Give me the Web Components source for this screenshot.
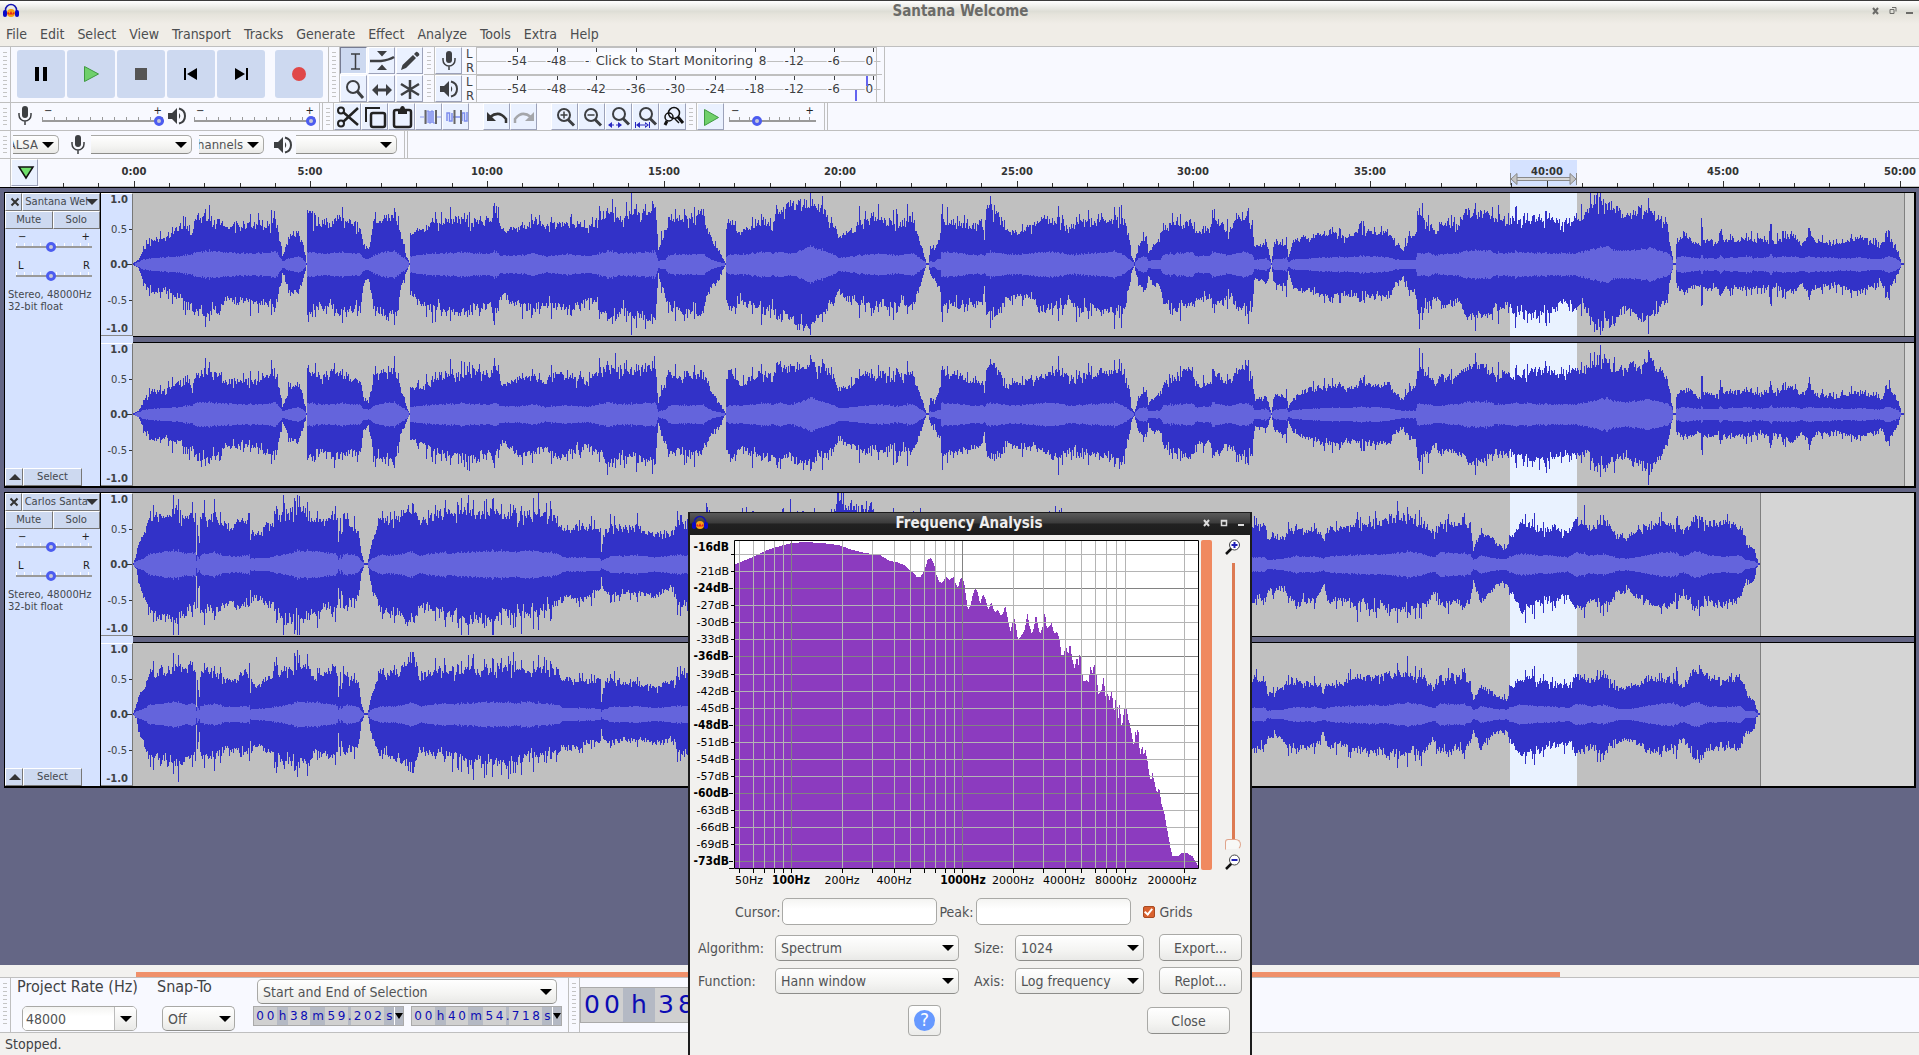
<!DOCTYPE html>
<html lang="en">
<head>
<meta charset="utf-8">
<title>Santana Welcome</title>
<style>
html,body{margin:0;height:100%;overflow:hidden}
body{font:14px/18px "DejaVu Sans Condensed","DejaVu Sans",sans-serif;color:#3f4245;background:#f2f1ef;
--bar:#f8f9ff;--line:#bfbfbf;--btn:#cdd9f0;--panel:#d5e2ff;--slate:#646685;--small:10px/12px "DejaVu Sans",sans-serif}
</style>
</head>
<body>
<audio-editor></audio-editor>
<script>
const BASE = `<style>*{box-sizing:border-box}:host{display:block}svg{display:block}
button,select,input{font:inherit;color:inherit;margin:0;padding:0;border:0;background:none}
button{display:grid;place-items:center}</style>`;
function define(name, css, html, after) {
  customElements.define(name, class extends HTMLElement {
    constructor() { super(); this.attachShadow({mode: 'open'}); }
    connectedCallback() {
      this.shadowRoot.innerHTML = BASE + `<style>${css}</style>` + html(this);
      if (after) after(this);
    }
  });
}
const attr = (el, n, d = '') => el.getAttribute(n) ?? d;

/* ---------- icons ---------- */
const K = '#3d3f42';
const lens = (inner) => `<circle cx="10" cy="9" r="6" fill="none" stroke="${K}" stroke-width="2"/><path d="M14 13.500L20 19.500" stroke="${K}" stroke-width="3"/>${inner}`;
const ICONS = {
  logo: [16, 16, `<path d="M2.500 11V7a5.500 5.500 0 0 1 11 0v4" fill="none" stroke="#1414b4" stroke-width="1.500"/><rect x="0" y="7" width="4" height="7" rx="2" fill="#0a0ac8"/><rect x="12" y="7" width="4" height="7" rx="2" fill="#0a0ac8"/><circle cx="8" cy="10" r="4" fill="#f7a316"/><path d="M4 10l1.500-1 1 2 1.500-3 1.500 3 1-2 1.500 1-1.500 1.500H5z" fill="#e8231c"/>`],
  pause: [48, 48, '<path d="M18 17h4v14h-4zM26 17h4v14h-4z" fill="#000"/>'],
  play: [48, 48, '<path d="M17.500 16.500v15l14-7.500z" fill="#6fd06b" stroke="#3f9a41"/>'],
  stop: [48, 48, '<path d="M18 18h12v12H18z" fill="#555"/>'],
  start: [48, 48, '<path d="M17 18h2v12h-2zM30 18v12l-10-6z" fill="#000"/>'],
  end: [48, 48, '<path d="M29 18h2v12h-2zM18 18v12l10-6z" fill="#000"/>'],
  record: [48, 48, '<circle cx="24" cy="24" r="7" fill="#e04848"/>'],
  ibeam: [26, 26, `<path d="M10 6h9M10 21h9M14.500 6v15" stroke="${K}" stroke-width="1.500" fill="none"/>`],
  envelope: [26, 26, `<path d="M8 3h10l-5 5.500zM8 22h10l-5-5.500z" fill="${K}"/><path d="M1 13h11q8-1 13-4" stroke="${K}" stroke-width="2.500" fill="none"/>`],
  pencil: [26, 26, `<path d="M4 22l1.500-5L16 7l3 3L9 20zM17 6l2-2q1-.5 2 .500l1 1q.7 1 0 2l-2 1.500z" fill="${K}"/>`],
  zoom: [26, 26, `<circle cx="12" cy="11" r="6" fill="none" stroke="${K}" stroke-width="2"/><path d="M16 15l6 7" stroke="${K}" stroke-width="3"/>`],
  shift: [26, 26, `<path d="M3 14l6-6v4.500h8V8l6 6-6 6v-4.500H9V20z" fill="${K}"/>`],
  multi: [26, 26, `<path d="M13 4v19M4 8l18 11M22 8L4 19" stroke="${K}" stroke-width="2.500"/>`],
  mic: [26, 26, `<rect x="10" y="3" width="6" height="12" rx="3" fill="${K}"/><path d="M7 10v2a6 6 0 0 0 12 0v-2M13 18v4" fill="none" stroke="${K}" stroke-width="1.500"/>`],
  speaker: [26, 26, `<path d="M4 10h4l5-5v16l-5-5H4z" fill="${K}"/><path d="M15 10q2.500 3 0 6" fill="${K}"/><path d="M15 5.500q6 1.500 6 7.500t-6 7.500" fill="none" stroke="${K}" stroke-width="2"/>`],
  cut: [26, 26, `<path d="M8 8l15 13M8 18L23 4" stroke="#222" stroke-width="2.500"/><circle cx="6" cy="6.500" r="3" fill="none" stroke="#222" stroke-width="2"/><circle cx="6" cy="19.500" r="3" fill="none" stroke="#222" stroke-width="2"/>`],
  copy: [26, 26, '<path d="M4 18V4h14" fill="none" stroke="#222" stroke-width="2"/><rect x="9" y="9" width="14" height="14" rx="2" fill="none" stroke="#222" stroke-width="2.500"/>'],
  paste: [26, 26, '<rect x="5" y="6" width="17" height="17" rx="2" fill="none" stroke="#222" stroke-width="2.500"/><path d="M9 5h2q.5-3 2.500-3T16 5h2v5H9z" fill="#222"/>'],
  trim: [26, 26, '<path d="M4 13h4M21 13h4M11 7v12M13 7v12M15 7v12M17 7v12" stroke="#8c9af0" stroke-width="1.200" fill="none"/><path d="M11 7h2v12h2V7h2v12h2" fill="none" stroke="#7c8cec"/><path d="M9.500 6v14M20 6v14" stroke="#666" stroke-width="2"/>'],
  silence: [26, 26, '<path d="M4 17V9h2.500v8H9V9M10 13h7M19 17V9h2.500v8H24V8" stroke="#7c8cec" stroke-width="1.500" fill="none"/><path d="M11.500 6v14M18 6v14" stroke="#666" stroke-width="2"/>'],
  undo: [26, 26, '<path d="M6 13q9-7 16 2v4" fill="none" stroke="#333" stroke-width="2.500"/><path d="M3 8v9h9z" fill="#333"/>'],
  redo: [26, 26, '<path d="M20 13q-9-7-16 2v4" fill="none" stroke="#a4a6aa" stroke-width="2.500"/><path d="M23 8v9h-9z" fill="#a4a6aa"/>'],
  zin: [26, 26, `<g transform="translate(2 2)">${lens(`<path d="M6.500 9h7M10 5.500v7" stroke="${K}" stroke-width="1.500"/>`)}</g>`],
  zout: [26, 26, `<g transform="translate(2 2)">${lens(`<path d="M6.500 9h7" stroke="${K}" stroke-width="1.500"/>`)}</g>`],
  zsel: [26, 26, `<g transform="translate(3 1)">${lens('')}</g><path d="M2 21l4-3v6zM16 21l-4-3v6z" fill="#2828c0"/><path d="M5 21h3M10 21h3" stroke="#2828c0"/>`],
  zfit: [26, 26, `<g transform="translate(3 1)">${lens('')}</g><path d="M2.500 18v6M16.500 18v6" stroke="#2828c0"/><path d="M3 21l4-3v6zM16 21l-4-3v6zM5 20.500h9v1H5z" fill="#2828c0"/>`],
  ztog: [26, 26, '<g fill="none" stroke="#111" stroke-width="1.500"><circle cx="14" cy="9" r="5.500"/><circle cx="9" cy="13" r="4"/><path d="M7 17l-2 4M18 13l5 6" stroke-width="3"/><path d="M15 15l4 4"/></g>'],
  playsm: [26, 26, '<path d="M6.500 5.500v16l14-8z" fill="#6fd06b" stroke="#3f9a41"/>'],
  pin: [26, 26, '<path d="M7 7h14l-7 11z" fill="#6fe06b" stroke="#111" stroke-width="1.500"/>'],
  plusLens: [16, 16, '<path d="M1 15l6-6" stroke="#111" stroke-width="2.500"/><circle cx="9.500" cy="6" r="5" fill="#fff" stroke="#444"/><path d="M6.500 6h6M9.500 3v6" stroke="#2020b4" stroke-width="2"/>'],
  minusLens: [16, 16, '<path d="M1 15l6-6" stroke="#111" stroke-width="2.500"/><circle cx="9.500" cy="6" r="5" fill="#fff" stroke="#444"/><path d="M6.500 6h6" stroke="#2020b4" stroke-width="2"/>']
};
const icon = n => { const [w, h, b] = ICONS[n]; return `<svg width="${w}" height="${h}" viewBox="0 0 ${w} ${h}" aria-hidden="true">${b}</svg>`; };
define('ui-icon', ':host{flex:none}', el => icon(attr(el, 'name')));

/* ---------- toolbar parts ---------- */
define('tool-grip', `:host{flex:none;width:11px;border-right:1px solid var(--line);padding:5px 3px}
i{display:block;height:100%;background:repeating-linear-gradient(#c4c4c4 0 1px,transparent 1px 4px)}`,
  el => el.hasAttribute('blank') ? '' : '<i></i>');
define('transport-button', `button{width:48px;height:48px;background:var(--btn);border-radius:3px}`,
  el => `<button aria-label="${attr(el, 'name')}">${icon(attr(el, 'name'))}</button>`);
define('tool-button', `:host{flex:none}button{width:27px;height:27px;background:#eaf1ff;border-right:1px solid #9ca2ba;border-bottom:1px solid #9ca2ba;border-left:1px solid #fff;border-top:1px solid #fff}
:host([active]) button{background:var(--btn);border-color:#777c92 #fff #fff #777c92}`,
  el => `<button aria-label="${attr(el, 'name')}">${icon(attr(el, 'name'))}</button>`);
define('level-slider', `:host{display:block;width:var(--w,122px)}
div{display:flex;justify-content:space-between;font:var(--small);height:10px;padding:0 2px;color:#222;line-height:10px}
input{appearance:none;display:block;width:100%;height:14px;margin-top:-4px;background:
linear-gradient(#9a9a9a,#9a9a9a) 0 8px/100% 2px no-repeat,
repeating-linear-gradient(90deg,var(--tick,#9a9a9a) 0 1px,transparent 1px var(--step,12px)) 0 5px/100% 3px no-repeat}
input::-webkit-slider-thumb{appearance:none;width:10px;height:10px;border-radius:50%;border:3px solid #4c5cf0;background:#c8c8d8;position:relative;top:2px}`,
  el => `<div><span>${attr(el, 'lo', '−')}</span><span>${attr(el, 'hi', '+')}</span></div><input type="range" min="0" max="100" value="${attr(el, 'value', '100')}" aria-label="${attr(el, 'label')}">`);
define('drop-down', `:host{display:block;position:relative;width:var(--w);height:var(--h,26px);overflow:hidden}
select{appearance:none;position:relative;width:100%;height:100%;padding:0 24px 0 5px;border:1px solid #a9a9a6;border-bottom-color:#8d8d8a;border-radius:5px;background:linear-gradient(#fff,#f4f4f2 60%,#e9e9e7);color:#515355}
:host([cut]) select{border-left:0;border-radius:0 5px 5px 0;padding:0 20px 0 0;direction:rtl}
:host::after{content:"";position:absolute;right:var(--ar,5px);top:50%;margin-top:-3px;border:6px solid transparent;border-top-color:#000;border-bottom:0;pointer-events:none}`,
  el => `<select aria-label="${attr(el, 'label')}"><option>${attr(el, 'value')}</option></select>`);

define('level-meter', `:host{display:flex;height:27px}
.ch{width:14px;padding-left:4px;font:13px/14px "DejaVu Sans Condensed","DejaVu Sans",sans-serif}
svg{font:12px "DejaVu Sans",sans-serif}
.tip{position:absolute;left:115px;top:5px;background:#fbfcff;border:0;height:18px;width:167px;font:13px/18px "DejaVu Sans Condensed","DejaVu Sans",sans-serif;font-family:"DejaVu Sans",sans-serif;white-space:nowrap}
.m{position:relative}`, el => {
  let s = '';
  const tip = el.hasAttribute('tip');
  for (let i = 0; i < 10; i++) {
    const x = 41 + i * 39.6, v = -54 + i * 6, t = 'text-anchor="middle"';
    s += `<path d="M${Math.round(x)}.5 1v4" stroke="${K}"/>`;
    if (tip && v > -42 && v < -18) continue;
    /* the monitoring button lies over the middle of the scale */
    const [label, dx] = tip && v === -42 ? ['-', -9] : tip && v === -18 ? ['8', 8] : [v, v ? 0 : -4];
    s += `<text x="${x + dx}" y="18" ${t} fill="${K}" stroke="#f8f9ff" stroke-width="3" paint-order="stroke">${label}</text>`;
  }
  const peaks = el.hasAttribute('peaks') ? '<path d="M391 1v10M380 15v11" stroke="#6464f0" stroke-width="2"/>' : '';
  return `<tool-button name="${attr(el, 'name')}"></tool-button><div class="ch">L<br>R</div><div class="m"><svg width="406" height="27"><path d="M.5 0v27M.5 .5h400M.5 14.500h404M400.500 0v27" fill="none" stroke="#bfbfbf"/>${s}${peaks}</svg>${tip ? '<button class="tip">Click to Start Monitoring</button>' : ''}</div>`;
});

/* ---------- time ruler ---------- */
const T0 = 134.3, PPM = 35.32;
define('time-ruler', `:host{flex:1;min-width:0;overflow:hidden}svg{font:bold 10px "DejaVu Sans",sans-serif}`, el => {
  let s = '';
  for (let m = -2; m <= 50; m++) {
    const x = Math.floor(T0 + m * PPM) - 39;
    s += `<path d="M${x}.5 ${m % 5 || m < 0 ? 24 : 22}v6" stroke="#333"/>`;
    if (m % 5 === 0) s += `<text x="${x}" y="16" text-anchor="middle" fill="#333">${m}:00</text>`;
  }
  return `<svg width="100%" height="28"><rect x="1471" y="1" width="67" height="27" fill="#d5e2ff"/><path d="M0 27.500h3000" stroke="#c4c4c4"/>
<path d="M1477 18.500h55v3h-55z" fill="#d8d8d8" stroke="#888"/><path d="M1471.500 14v12M1537.500 14v12" stroke="#888"/><path d="M1478 14.500v11l-6-5.500zM1531 14.500v11l6-5.500z" fill="#c4c4c4" stroke="#888"/>${s}</svg>`;
});

/* ---------- wave data: time position, upper peak, lower peak, rms ---------- */
const WAVES = [
`133 1 1 1,138 4 4 2,144 17 20 5,152 25 28 6,165 26 28 7,180 37 33 8,192 33 46 10,194 42 48 12,196 48 50 13,220 45 50 13,225 36 35 12,245 38 36 11,270 42 42 12,275 48 47 14,279 28 28 8,282 8 10 3,290 30 28 6,298 34 32 8,302 25 20 6,306 1 1 1,307 58 55 13,312 44 45 12,320 40 40 11,340 48 50 12,360 38 46 11,363 20 20 6,368 14 14 5,373 40 42 9,385 50 54 13,395 50 54 13,400 30 25 9,406 8 8 5,409 1 1 1,410 28 28 8,425 34 40 10,440 42 45 11,460 46 50 12,480 45 45 11,490 45 45 11,496 55 52 13,500 38 38 9,505 33 33 9,520 38 45 9,535 44 46 11,545 38 40 8,565 42 48 10,580 42 42 9,588 35 35 8,600 48 45 11,608 50 54 14,620 48 48 11,640 52 54 12,655 56 56 13,658 16 12 3,665 36 35 5,670 48 46 10,690 46 48 10,703 50 46 11,706 38 35 8,712 22 20 4,718 14 16 2,724 3 3 1,725 1 1 1,726 36 36 8,730 44 45 10,740 33 38 10,760 46 50 12,768 44 50 13,772 36 42 10,776 56 56 13,790 55 50 11,800 55 58 14,811 62 62 19,820 55 50 15,832 48 46 11,838 28 28 7,845 32 36 7,860 40 38 9,880 46 42 11,895 42 44 9,912 48 44 11,915 35 35 10,921 18 18 5,926 1 1 1,928 1 1 1,930 18 12 3,934 14 15 2,937 22 25 5,940 30 27 5,941 48 46 12,955 42 42 12,975 36 38 9,982 40 38 10,984 26 23 8,986 56 50 12,1000 50 48 12,1005 34 36 10,1020 34 36 10,1028 40 38 11,1045 46 48 13,1058 48 48 12,1073 34 38 9,1078 44 46 10,1100 46 46 12,1115 48 50 13,1124 45 48 9,1129 26 22 5,1131 7 8 3,1134 2 2 1,1138 20 22 6,1146 26 25 8,1148 12 12 3,1152 18 22 4,1160 24 20 4,1163 38 40 10,1180 42 44 11,1192 46 46 13,1195 32 36 8,1210 34 32 9,1213 48 46 13,1228 36 36 9,1243 52 48 13,1252 42 46 10,1254 16 14 4,1266 22 20 6,1269 10 8 3,1271 1 1 1,1274 22 20 5,1286 20 24 6,1288 8 8 2,1293 22 24 5,1310 28 28 6,1325 32 34 7,1345 28 32 7,1360 34 32 8,1375 30 32 8,1388 34 34 7,1394 22 20 5,1402 16 16 4,1409 28 26 4,1415 30 28 4,1417 50 48 11,1430 40 42 11,1435 34 36 9,1440 42 44 10,1460 44 42 12,1465 52 52 14,1490 50 50 14,1495 44 44 11,1510 45 46 12,1530 45 52 12,1550 44 46 11,1575 46 44 11,1583 50 44 13,1595 58 56 16,1607 64 62 19,1613 54 55 15,1625 50 45 14,1635 54 56 15,1650 56 56 17,1660 48 46 14,1668 34 30 11,1671 16 12 8,1673 1 1 1,1675 1 1 1,1676 20 20 6,1682 32 30 8,1700 18 20 6,1701 46 44 10,1703 24 26 6,1718 22 24 6,1720 38 36 10,1723 24 25 6,1750 26 25 8,1753 24 24 6,1768 26 26 7,1770 40 40 10,1773 24 24 7,1795 30 30 8,1800 20 20 6,1810 34 34 8,1815 24 24 7,1825 22 24 7,1835 20 22 6,1850 24 26 6,1860 26 28 7,1875 20 20 5,1880 18 18 5,1888 30 30 8,1895 18 16 6,1900 6 4 2,1901 1 1 1,1904 1 1 1`,
`133 1 1 1,136 10 5 3,138 20 20 4,145 33 38 7,148 45 48 10,155 44 48 11,165 50 55 13,176 55 58 14,185 44 48 11,190 50 44 12,195 42 42 11,196 9 12 3,197 40 40 9,199 20 20 5,200 46 46 9,203 48 46 10,215 50 50 12,222 40 42 9,235 40 42 8,248 48 44 9,249 48 44 9,250 24 30 5,252 34 38 6,256 28 34 6,270 42 42 7,285 50 55 10,300 52 52 14,315 46 48 13,335 50 48 11,337 44 42 9,338 20 22 5,340 44 42 9,341 22 22 5,343 48 44 10,350 42 42 10,358 34 35 8,361 12 10 3,364 1 1 1,367 1 1 1,368 5 5 2,372 24 28 6,380 46 46 9,395 46 50 9,412 62 60 13,420 44 45 9,440 56 50 12,450 50 50 11,480 50 55 13,500 54 56 14,515 52 56 12,525 50 50 14,545 50 45 12,560 42 38 10,562 38 38 7,575 36 36 7,600 36 28 6,601 14 15 3,603 30 28 5,610 38 32 8,640 36 30 9,655 30 34 7,670 36 28 9,680 46 46 9,689 46 44 9,720 48 45 10,830 48 45 10,838 60 50 12,871 60 50 12,874 42 40 10,1250 38 36 7,1265 38 36 7,1267 22 25 4,1280 28 26 5,1295 36 40 8,1315 34 36 8,1323 27 22 6,1328 34 38 8,1345 36 36 9,1370 42 44 10,1385 46 46 10,1408 48 46 13,1425 40 42 10,1434 30 30 7,1440 42 44 12,1460 40 38 11,1470 38 36 10,1473 16 18 4,1480 30 38 9,1490 28 28 7,1495 20 20 6,1506 16 20 5,1510 28 30 8,1520 40 46 11,1535 38 42 9,1550 36 38 9,1568 30 32 7,1575 46 46 12,1590 38 38 9,1605 40 42 10,1618 28 30 6,1630 32 30 6,1655 40 42 11,1670 40 40 13,1683 36 32 8,1695 50 50 14,1708 40 38 9,1725 38 38 8,1740 42 38 9,1745 30 20 4,1747 18 20 4,1754 16 18 3,1756 6 4 1,1758 1 1 1,1760 1 1 1`
].map(t => t.split(',').map(p => p.split(' ').map(Number)));
const rng = s => () => ((s = Math.imul(s ^ s >>> 15, 2246822519) + 0x9e3779b9 | 0), ((s ^ s >>> 13) >>> 0) / 4294967296);
function wave(track, ch) {
  const pts = WAVES[track], shared = rng(77 + track * 31), own = rng(1234 + track * 7 + ch * 99), g = ch ? .9 : 1;
  let i = 0, peaks = '', rms = '', end = pts[pts.length - 1][0], drift = 0;
  for (let x = 133; x < end; x++) {
    while (pts[i + 1][0] <= x) i++;
    const a = pts[i], b = pts[i + 1], k = (x - a[0]) / (b[0] - a[0]);
    const v = n => a[n] + (b[n] - a[n]) * k;
    const spike = shared() > .86 ? 1.08 + shared() * .2 : .98;
    const gap = own() > .93 ? .86 : 1;
    drift = drift * .85 + (own() - .5) * .09;
    const n = () => spike * gap * (.9 + own() * .19 + drift);
    const up = Math.min(71, Math.max(1, Math.round(v(1) * g * n()))), dn = Math.min(71, Math.max(1, Math.round(v(2) * g * n())));
    const r = Math.max(0, Math.round(v(3) * (ch ? .86 : .95) * (.93 + own() * .14) * Math.sqrt(spike)));
    peaks += `M${x - 133}.5 ${71 - up}v${up + dn}`;
    if (v(1) > 2) rms += `M${x - 133}.5 ${71 - r}v${2 * r + 1}`;
  }
  return {peaks, rms, end: end - 133};
}
define('wave-channel', `:host{display:flex;height:143px;background:#d5d5d5}
.scale{flex:none;width:32px;background:var(--panel);border-right:1px solid #777;border-top:1px solid #fff;border-bottom:1px solid #888}
.plot{flex:1;min-width:0;overflow:hidden}
text{text-anchor:end;fill:#3f4245;font:10px "DejaVu Sans",sans-serif}.b{font-weight:bold}`, el => {
  const w = wave(+attr(el, 'track'), +attr(el, 'channel'));
  return `<svg class="scale" width="32" height="143"><text class="b" x="27" y="9">1.0</text><text x="26" y="39">0.5</text><text class="b" x="27" y="74">0.0</text><text x="26" y="110">-0.5</text><text class="b" x="27" y="138">-1.0</text><path d="M28 35.500h4M26 70.500h6M28 106.500h4M27 141.500h5" stroke="#333"/></svg>
<svg class="plot" width="100%" height="143" shape-rendering="crispEdges"><path d="M0 0h${w.end}v143H0z" fill="#c0c0c0"/><path d="M1377 0h67v143h-67z" fill="#e9f2ff"/><path d="M${w.end}.5 0v143" stroke="#808080"/><path d="${w.peaks}" stroke="#3232c8"/><path d="${w.rms}" stroke="#6464dc"/></svg>`;
});
define('audio-track', `:host{display:flex;border:1px solid #000;border-right-width:2px;border-bottom-width:2px;height:296px}
.panel{flex:none;width:96px;background:var(--panel);border-right:1px solid #000;font:var(--small);color:#44484e;display:flex;flex-direction:column}
.row{display:flex;height:18px}
button{background:var(--btn);border:1px solid #fff;border-right-color:#777;border-bottom-color:#777;height:18px}
.x,.up{width:18px;padding-left:2px}.name{flex:1;display:flex;align-items:center;justify-content:space-between;padding:0 1px 0 2px;white-space:nowrap}
.name::after{content:"";border:6px solid transparent;border-top-color:#333;border-bottom:0;margin-left:-2px}
.half{flex:1}.sl{padding:0 7px 0 11px;--w:94px;--tick:#fff;--step:8px}
.one{margin-top:3px}.two{margin-top:9px}
p{margin:8px 0 0 3px;flex:1}.sel{width:59px}
.waves{flex:1;min-width:0}
.gap{height:7px;display:flex}.gap i{width:32px;background:var(--panel);}.gap b{flex:1;background:var(--slate);border:solid #000;border-width:1px 0}`,
  el => `<div class="panel"><div class="row"><button class="x" aria-label="Close track"><svg width="10" height="10"><path d="M1.500 1.500l7 7M8.500 1.500l-7 7" stroke="#333" stroke-width="2"/></svg></button><button class="name">${attr(el, 'name')}</button></div>
<div class="row"><button class="half">Mute</button><button class="half">Solo</button></div>
<level-slider class="sl one" lo="−" value="46" label="Gain"></level-slider><level-slider class="sl two" lo="L" hi="R" value="46" label="Pan"></level-slider>
<p>Stereo, 48000Hz<br>32-bit float</p>
<div class="row"><button class="up" aria-label="Collapse"><svg width="12" height="8"><path d="M0 7h12L6 1z" fill="#333"/></svg></button><button class="sel">Select</button></div></div>
<div class="waves"><wave-channel track="${attr(el, 'track')}" channel="0"></wave-channel><div class="gap"><i></i><b></b></div><wave-channel track="${attr(el, 'track')}" channel="1"></wave-channel></div>`);

/* ---------- time fields ---------- */
define('time-field', `:host{display:flex;height:20px;background:#b4b9c4;border:1px solid #aaa;color:#0c0cb4;font:12px/18px "DejaVu Sans",sans-serif;width:var(--tw,151px)}
span{display:flex;padding:0 1px;overflow:hidden}.d{background:#d0d0d0}
b{font-weight:normal;width:var(--dw,11px);text-align:center}.u b{width:auto;padding:0 1px}.p{padding:0;}
button{flex:1;border-left:1px solid #fff}button i{border:4px solid transparent;border-top:6px solid #000;border-bottom:0}
:host([big]){height:36px;font-size:25px;line-height:34px;--dw:20px;--tw:auto;flex:none}:host([big]) .u{padding:0 7px}`,
  el => attr(el, 'value').split(/(\D)/).filter(Boolean).map(p => /\d/.test(p) ? `<span class="d">${[...p].map(c => `<b>${c}</b>`).join('')}</span>` : p === '.' ? '<span class="p">.</span>' : `<span class="u"><b>${p}</b></span>`).join('') + (el.hasAttribute('big') ? '' : '<button aria-label="Format"><i></i></button>'));

/* ---------- frequency plot ---------- */
const SPEC = '147,193 163,186 198,170 231,152 258,142 279,135 301,129 340,126 400,131 430,136 460,148 490,157 540,166 565,182 590,188 605,196 623,212 640,232 648,232 660,210 668,180 677,174 685,190 692,225 700,245 706,250 712,240 720,231 726,240 738,231 744,250 750,262 757,238 762,230 767,250 773,300 777,328 783,320 790,285 797,262 803,275 810,312 818,282 824,295 832,330 840,306 850,338 858,330 866,348 872,340 878,317 884,350 892,395 897,370 902,350 907,380 912,420 920,410 930,390 938,342 944,380 950,402 956,380 961,340 966,375 972,402 978,385 985,335 990,384 997,380 1003,370 1010,400 1018,396 1024,415 1030,464 1036,464 1042,435 1048,465 1053,426 1058,470 1065,505 1072,470 1076,495 1080,450 1084,505 1090,546 1098,540 1103,546 1109,495 1113,525 1118,490 1124,520 1130,582 1138,570 1144,532 1150,600 1155,580 1160,600 1166,570 1172,645 1178,578 1184,655 1187,612 1193,685 1198,640 1204,610 1210,655 1215,675 1220,705 1226,740 1230,695 1234,710 1237,668 1240,740 1244,765 1248,735 1252,765 1257,750 1262,780 1267,820 1272,845 1276,820 1282,850 1288,880 1294,862 1300,910 1308,940 1316,990 1324,1040 1330,1068 1345,1068 1355,1058 1370,1060 1385,1070 1395,1090 1401,1103'
  .split(' ').map(p => { const [x, y] = p.split(',').map(Number); return [x / 2.7034 + 680, y / 3 + 500]; });
define('spectrum-plot', `svg{font:11px "DejaVu Sans",sans-serif}.b{font-weight:bold;font-family:"DejaVu Sans Condensed","DejaVu Sans",sans-serif;font-size:12px}`, () => {
  let bars = '', i = 0, s = '', ax = '';
  for (let x = 735; x < 1198; x++) {
    while (i < SPEC.length - 2 && SPEC[i + 1][0] < x) i++;
    const [x0, y0] = SPEC[i], [x1, y1] = SPEC[i + 1];
    bars += `M${x}.5 ${Math.round(y0 + (y1 - y0) * (x - x0) / (x1 - x0))}V869`;
  }
  const db = [null, 21, 24, 27, 30, 33, 36, 39, 42, 45, 48, 51, 54, 57, 60, 63, 66, 69, 73];
  db.forEach((d, n) => {
    const y = 554 + n * 17 + (n > 6 ? 1 : 0), bold = d && (d % 12 === 0 || d === 73);
    s += `<path d="M735 ${y}.5h463" stroke="${bold ? '#828282' : '#b4b4b4'}"/>`;
    ax += `<path d="M${bold ? 729 : 731} ${y}.5h4" stroke="#000"/>`;
    if (d) ax += `<text x="729" y="${y + 4}" text-anchor="end"${bold ? ' class="b"' : ''}>-${d}dB</text>`;
  });
  ax += '<text x="729" y="551" text-anchor="end" class="b">-16dB</text>';
  for (const f of [50, 60, 70, 80, 90, 100, 200, 300, 400, 500, 600, 700, 800, 900, 1000, 2000, 3000, 4000, 5000, 6000, 7000, 8000, 9000, 20000]) {
    const x = Math.floor(962.4 + 171 * Math.log10(f / 1000)), bold = f === 100 || f === 1000;
    s += `<path d="M${x}.5 541v328" stroke="${bold ? '#828282' : '#b4b4b4'}"/>`;
    ax += `<path d="M${x}.5 869v4" stroke="#000"/>`;
  }
  for (const [f, x] of [[50, 749], [100, 791], [200, 842], [400, 894], [1000, 963], [2000, 1013], [4000, 1064], [8000, 1116], [20000, 1172]])
    ax += `<text x="${x}" y="884" text-anchor="middle"${f === 100 || f === 1000 ? ' class="b"' : ''}>${f}Hz</text>`;
  return `<svg width="510" height="354" viewBox="690 536 510 354"><path d="M734.500 540.500h464v328h-464z" fill="#fff"/><g shape-rendering="crispEdges"><path d="${bars}" stroke="#8c3bbf"/>${s}</g><path d="M734.500 540.500h464v328h-464zM729 868.500h5" fill="none" stroke="#000"/>${ax}</svg>`;
});
define('push-button', `button{width:83px;height:27px;border:1px solid #a9a9a6;border-bottom-color:#8d8d8a;border-radius:5px;background:linear-gradient(#fff,#f4f4f2 60%,#e9e9e7);color:#515355}`, () => '<button><slot></slot></button>');
define('frequency-dialog', `:host{background:#f2f1ef;border:2px solid #1c1c1c;border-bottom:0;border-top:1px solid #1c1c1c;color:#515355}
header{display:flex;align-items:center;height:22px;background:linear-gradient(#5a5a5a,#3c3c3c 45%,#222 50%,#1c1c1c);color:#eee;padding:0 4px 2px 2px;gap:7px}
h2{flex:1;margin:0;text-align:center;font:bold 15px/18px "DejaVu Sans Condensed","DejaVu Sans",sans-serif;padding-left:28px}
header button{width:10px;height:16px}
.top{display:flex;height:354px;margin-top:1px}
.pan{width:11px;height:330px;margin:4px 0 0 1px;background:#f0895f;border-radius:2px}
.zoom{display:flex;flex-direction:column;align-items:center;width:16px;margin:3px 0 0 13px;height:332px}
.zoom input{appearance:none;writing-mode:vertical-lr;width:16px;height:287px;margin:8px 0 4px;background:linear-gradient(#dd7a52,#dd7a52) 7px 0/3px 276px no-repeat}
.zoom input::-webkit-slider-thumb{appearance:none;width:16px;height:11px;background:#f8f8f6;border:1px solid #e0a58c;border-bottom-color:#f2f1ef;border-radius:4px 7px 7px 0}
.read{display:flex;align-items:center;height:27px;margin:8px 0 0 45px}
.read label,.read input[type=text]{flex:none}
.read input[type=text]{width:155px;height:27px;border:1px solid #a9a9a6;border-radius:5px;background:linear-gradient(#f4f4f2,#fff 40%);margin:0 2px}
.read input[type=checkbox]{appearance:none;width:12px;height:12px;background:#d9622f;border:1px solid #a84a22;border-radius:2px;margin:0 5px 0 10px;display:grid;place-items:center}
.read input[type=checkbox]::before{content:"";width:3px;height:6px;border:solid #fff;border-width:0 2px 2px 0;transform:rotate(40deg);margin-top:-2px}
.form{display:grid;grid-template-columns:77px 184px 56px 129px 83px;column-gap:0;row-gap:6px;align-items:center;margin:9px 0 0 8px}
.form .l2{padding-left:15px}.form push-button{margin-left:15px}
.foot{display:flex;justify-content:space-between;align-items:center;margin:11px 20px 19px 218px}
.help{width:33px;height:31px;border:1px solid #a9a9a6;border-radius:4px;background:linear-gradient(#fff,#ececea)}
.help span{width:21px;height:21px;border-radius:50%;background:#6699ff;color:#fff;font:17px/21px "DejaVu Sans",sans-serif}`,
  () => `<header>${icon('logo')}<h2>Frequency Analysis</h2><button aria-label="Close"><svg width="8" height="8"><path d="M1 1l5 6M6 1L1 7" stroke="#ddd" stroke-width="2"/></svg></button><button aria-label="Maximize"><svg width="8" height="8"><path d="M1.500 1.500h5v5h-5zM1 2h6" fill="none" stroke="#ddd" stroke-width="1.500"/></svg></button><button aria-label="Minimize"><svg width="8" height="8"><path d="M1 6h6" stroke="#ddd" stroke-width="2"/></svg></button></header>
<div class="top"><spectrum-plot></spectrum-plot><div class="pan"></div><div class="zoom">${icon('plusLens')}<input type="range" value="100" aria-label="Zoom">${icon('minusLens')}</div></div>
<div class="read"><label for="cur">Cursor:</label><input type="text" id="cur"><label for="peak">Peak:</label><input type="text" id="peak"><input type="checkbox" id="grids" checked><label for="grids">Grids</label></div>
<div class="form"><span>Algorithm:</span><drop-down label="Algorithm" value="Spectrum"></drop-down><span class="l2">Size:</span><drop-down label="Size" value="1024"></drop-down><push-button>Export...</push-button>
<span>Function:</span><drop-down label="Function" value="Hann window"></drop-down><span class="l2">Axis:</span><drop-down label="Axis" value="Log frequency"></drop-down><push-button>Replot...</push-button></div>
<div class="foot"><button class="help" aria-label="Help"><span>?</span></button><push-button>Close</push-button></div>`);

/* ---------- bars ---------- */
define('title-bar', `:host{display:flex;align-items:center;height:24px;border-top:1px solid #3a3a3a;background:linear-gradient(#fff,#deded6 45%,#e6e4dc 60%,#f0ede7);padding:0 3px 4px}
h1{flex:1;margin:0;text-align:center;font:bold 15px/18px "DejaVu Sans Condensed","DejaVu Sans",sans-serif;color:#6b6b68;padding-left:30px}
div{display:flex;gap:9px;padding-right:2px}button{width:8px;height:16px}`,
  () => `${icon('logo')}<h1>Santana Welcome</h1><div><button aria-label="Close"><svg width="8" height="8"><path d="M1 1l5 6M6 1L1 7" stroke="#6b6b68" stroke-width="2"/></svg></button><button aria-label="Restore"><svg width="8" height="8"><path d="M3 .5h4v4M1 2.500h4v4H1z" fill="none" stroke="#6b6b68"/></svg></button><button aria-label="Minimize"><svg width="8" height="8"><path d="M0 6h7" stroke="#6b6b68" stroke-width="2"/></svg></button></div>`);
define('menu-bar', `:host{height:22px;background:#f0ede7}nav{display:flex;gap:13px;padding:0 6px}button{height:20px;color:#4c4e50}`,
  () => '<nav>' + 'File,Edit,Select,View,Transport,Tracks,Generate,Effect,Analyze,Tools,Extra,Help'.split(',').map(m => `<button>${m}</button>`).join('') + '</nav>');
define('tool-docks', `:host{background:var(--bar)}
.row{display:flex;border-top:1px solid var(--line);height:28px}.r1{height:56px}
.tr{display:flex;gap:2px;padding:3px 5px 0 6px;border-right:1px solid var(--line)}
.tr :last-child{margin-left:8px}
.tools{display:grid;grid-template-columns:repeat(3,28px);grid-template-rows:28px 27px}
.meters>div{display:flex;height:28px}.meters>div:first-child{border-bottom:1px solid var(--line)}
.sp{border-right:1px solid var(--line)}.w3{width:3px}
.mix{display:flex;padding:0 3px 0 1px;border-right:1px solid var(--line)}
.mix level-slider{margin:3px 0 0 4px}.spd{margin:3px 6px 0 5px;--w:87px;--step:10px}
.edit{display:flex}.gap{width:14px}
.dev{display:flex;align-items:center;padding-left:2px;font:13px/18px "DejaVu Sans Condensed","DejaVu Sans",sans-serif}
.dev drop-down{--h:19px;--ar:5px}.dev ui-icon{margin-left:6px}.r4{height:29px}
.dev drop-down.c{margin-left:7px}:host{border-bottom:1px solid #000}`,
  () => `<div class="row r1"><tool-grip></tool-grip><div class="tr">${['pause', 'play', 'stop', 'start', 'end', 'record'].map(n => `<transport-button name="${n}"></transport-button>`).join('')}</div><tool-grip></tool-grip>
<div class="tools">${['ibeam', 'envelope', 'pencil', 'zoom', 'shift', 'multi'].map((n, i) => `<tool-button name="${n}"${i ? '' : ' active'}></tool-button>`).join('')}</div>
<div class="meters"><div><tool-grip></tool-grip><level-meter name="mic" tip></level-meter></div><div><tool-grip></tool-grip><level-meter name="speaker" peaks></level-meter></div></div><i class="sp w3"></i></div>
<div class="row"><tool-grip></tool-grip><div class="mix"><ui-icon name="mic"></ui-icon><level-slider label="Recording volume"></level-slider><ui-icon name="speaker"></ui-icon><level-slider label="Playback volume"></level-slider></div><i class="sp w3"></i><tool-grip></tool-grip>
<div class="edit">${['cut', 'copy', 'paste', 'trim', 'silence', '', 'undo', 'redo', '', 'zin', 'zout', 'zsel', 'zfit', 'ztog'].map(n => n ? `<tool-button name="${n}"></tool-button>` : '<i class="gap"></i>').join('')}</div><tool-grip></tool-grip><tool-button name="playsm"></tool-button><level-slider class="spd" value="30" label="Play speed"></level-slider><i class="sp w3"></i><i class="sp w3"></i></div>
<div class="row"><tool-grip></tool-grip><div class="dev"><drop-down cut label="Host" value="ALSA" style="--w:46px"></drop-down><ui-icon name="mic"></ui-icon><drop-down cut label="Recording device" value="" style="--w:101px"></drop-down><drop-down cut class="c" label="Channels" value="Channels" style="--w:65px"></drop-down><ui-icon name="speaker"></ui-icon><drop-down cut label="Playback device" value="" style="--w:101px"></drop-down></div><i class="sp" style="width:8px"></i><i class="sp w3"></i></div>
<div class="row r4"><tool-grip blank></tool-grip><tool-button name="pin"></tool-button><i style="width:1px"></i><time-ruler></time-ruler></div>`);
define('selection-bar', `:host{display:flex;height:56px;border:solid var(--line);border-width:1px 0;background:var(--bar);overflow:hidden}
.rate{width:141px;padding:0 0 0 6px}.snap{width:96px;padding:0 0 0 5px}.rate,.snap,.range{display:flex;flex-direction:column;justify-content:space-between}
label,.t{font-size:16px;line-height:18px;white-space:nowrap}
.combo{display:flex;width:115px;height:25px;margin:0 0 1px 5px;border:1px solid #a9a9a6;border-radius:5px;background:#fff;overflow:hidden;color:#515355}
.combo input{width:92px;padding-left:3px;background:linear-gradient(#f4f4f2,#fff 40%);border-right:1px solid #bbb}
.combo button{flex:1;background:linear-gradient(#fff,#e9e9e7)}.combo i{border:6px solid transparent;border-top-color:#000;border-bottom:0}
.snap drop-down{--w:73px;--h:25px;--ar:4px;margin:0 0 1px 5px}
.range{width:321px;padding:1px 0 6px 5px;border-right:1px solid var(--line)}.range drop-down{--w:300px;--h:25px;--ar:5px;margin-left:4px}
.times{display:flex;gap:7px}time-field[big]{margin-top:9px}`,
  () => `<tool-grip></tool-grip><div class="rate"><label for="rate">Project Rate (Hz)</label><div class="combo"><input id="rate" value="48000"><button aria-label="Rates"><i></i></button></div></div>
<div class="snap"><span class="t">Snap-To</span><drop-down label="Snap-To" value="Off"></drop-down></div>
<div class="range"><drop-down label="Selection mode" value="Start and End of Selection"></drop-down><div class="times"><time-field value="00h38m59.202s"></time-field><time-field value="00h40m54.718s"></time-field></div></div><tool-grip></tool-grip><time-field big value="00h38m59s"></time-field>`);
define('scroll-track', `:host{height:12px;background:#f2f1ef;padding:7px 359px 0 136px}i{display:block;height:5px;background:#f0906a}`, () => '<i></i>');
define('audio-editor', `:host{display:flex;flex-direction:column;height:100vh;position:relative;overflow:hidden}
main{flex:1;min-height:0;overflow:hidden;background:var(--slate);padding:4px 3px 0 4px;display:flex;flex-direction:column;gap:4px}
footer{height:22px;padding:1px 5px;line-height:20px}
frequency-dialog{position:absolute;left:688px;top:512px;width:564px;height:560px}`,
  () => `<title-bar></title-bar><menu-bar></menu-bar><tool-docks></tool-docks><main><audio-track track="0" name="Santana Wel"></audio-track><audio-track track="1" name="Carlos Santa"></audio-track></main><scroll-track></scroll-track><selection-bar></selection-bar><footer>Stopped.</footer><frequency-dialog></frequency-dialog>`);
</script>
</body>
</html>
